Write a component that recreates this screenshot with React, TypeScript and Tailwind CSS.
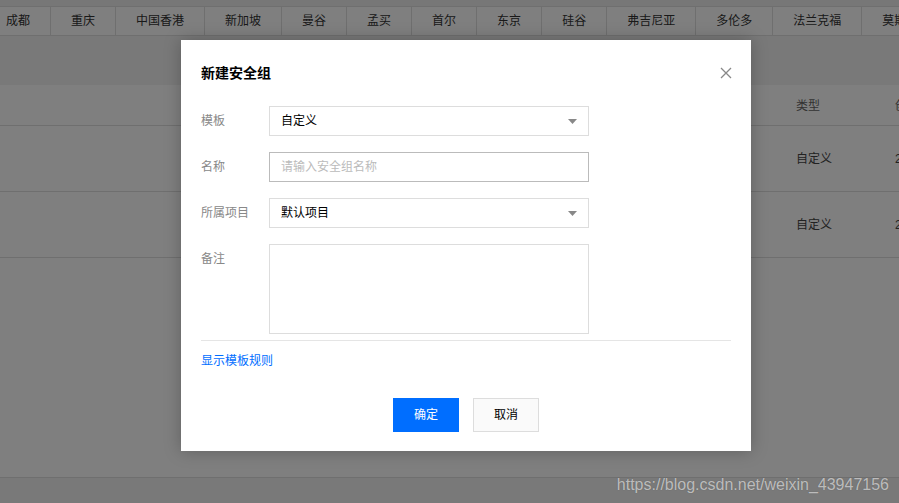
import React from 'react'

const FONT = { fontFamily: '"Liberation Sans", "Noto Sans CJK SC", sans-serif' }

const REGIONS = ['成都', '重庆', '中国香港', '新加坡', '曼谷', '孟买', '首尔', '东京', '硅谷', '弗吉尼亚', '多伦多', '法兰克福', '莫斯科']

function Caret() {
  return (
    <svg width="9" height="5" viewBox="0 0 9 5" className="shrink-0">
      <path d="M0 0h9L4.5 5z" fill="#888" />
    </svg>
  )
}

function Row({ label, children, tall }: { label: string; children: React.ReactNode; tall?: boolean }) {
  return (
    <div className="flex">
      <div className={`w-[68px] shrink-0 text-[12px] text-[#888] leading-[30px] ${tall ? 'self-start' : ''}`}>{label}</div>
      {children}
    </div>
  )
}

export default function App() {
  return (
    <div className="relative w-[899px] h-[503px] overflow-hidden bg-[#f3f3f3]" style={FONT}>
      {/* ── page underneath ── */}
      <div className="h-[6px] bg-[#efefef]" />
      <div className="flex h-[30px] bg-white border-y border-[#dedede] overflow-hidden">
        <div className="flex ml-[-14px]">
          {REGIONS.map((r) => (
            <div key={r} className="shrink-0 whitespace-nowrap px-5 border-r border-[#dedede] text-[12px] leading-[28px] text-[#333]">
              {r}
            </div>
          ))}
        </div>
      </div>
      <div className="h-[49px]" />
      <div className="bg-white h-[393px] border-b border-[#dedede] overflow-hidden">
        <div className="flex h-[41px] items-center pt-[2px] border-b border-[#dedede] text-[12px] text-[#666] whitespace-nowrap">
          <div className="w-[796px] shrink-0" />
          <div className="w-[99px] shrink-0">类型</div>
          <div className="shrink-0">创建时间</div>
        </div>
        {[0, 1].map((i) => (
          <div key={i} className="flex h-[66px] items-center border-b border-[#dedede] text-[12px] text-[#444] whitespace-nowrap">
            <div className="w-[796px] shrink-0" />
            <div className="w-[99px] shrink-0">自定义</div>
            <div className="shrink-0">2019-05-20</div>
          </div>
        ))}
      </div>

      {/* ── mask ── */}
      <div className="absolute inset-0 bg-black/50" />

      {/* ── dialog ── */}
      <div className="absolute left-[181px] top-[40px] w-[570px] h-[411px] bg-white shadow-[0_0_16px_rgba(0,0,0,0.25)] px-5 pt-[23px]">
        <div className="flex items-center justify-between h-[20px]">
          <h2 className="text-[14px] font-bold text-black">新建安全组</h2>
          <svg width="12" height="12" viewBox="0 0 12 12" className="mr-[-1px]">
            <path d="M1 1l10 10M11 1L1 11" stroke="#888" strokeWidth="1.3" />
          </svg>
        </div>

        <div className="mt-[23px] flex flex-col gap-[16px]">
          <Row label="模板">
            <div className="w-[320px] h-[30px] border border-[#ddd] flex items-center justify-between pl-[11px] pr-[11px] text-[12px] text-black">
              <span>自定义</span>
              <Caret />
            </div>
          </Row>
          <Row label="名称">
            <div className="w-[320px] h-[30px] border border-[#bbb] flex items-center pl-[11px] text-[12px] text-[#bbb]">
              请输入安全组名称
            </div>
          </Row>
          <Row label="所属项目">
            <div className="w-[320px] h-[30px] border border-[#ddd] flex items-center justify-between pl-[11px] pr-[11px] text-[12px] text-black">
              <span>默认项目</span>
              <Caret />
            </div>
          </Row>
          <Row label="备注" tall>
            <div className="w-[320px] h-[90px] border border-[#ddd]" />
          </Row>
        </div>

        <div className="mt-[6px] border-t border-[#e5e5e5]" />
        <div className="mt-[11px] text-[12px] leading-[18px] text-[#006eff]">显示模板规则</div>

        <div className="mt-[28px] flex justify-center gap-[14px]">
          <button className="w-[66px] h-[34px] bg-[#006eff] text-white text-[12px]">确定</button>
          <button className="w-[66px] h-[34px] bg-[#fafafa] border border-[#ddd] text-black text-[12px]">取消</button>
        </div>
      </div>

      {/* ── watermark ── */}
      <div className="absolute right-[10px] top-[473px] whitespace-nowrap text-[16px] text-white/60 [text-shadow:0_0_1px_rgba(0,0,0,0.3)]">
        https://blog.csdn.net/weixin_43947156
      </div>
    </div>
  )
}
